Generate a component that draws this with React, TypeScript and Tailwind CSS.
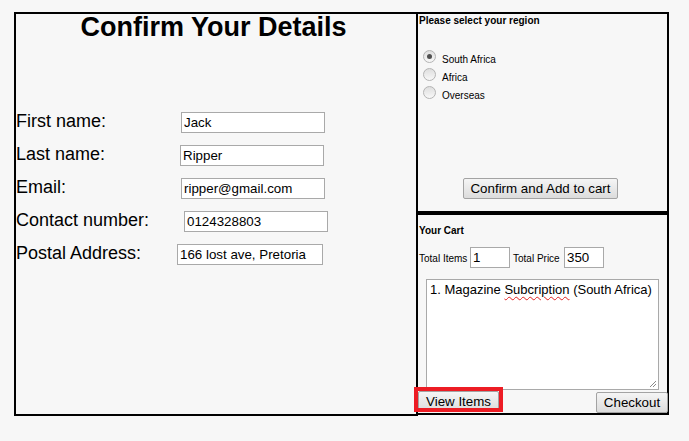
const font = { fontFamily: '"Liberation Sans", Arial, sans-serif' };

const fields = [
  { label: 'First name:', value: 'Jack', cls: 'ml-0 w-[144px]' },
  { label: 'Last name:', value: 'Ripper', cls: 'ml-[-1px] w-[144px]' },
  { label: 'Email:', value: 'ripper@gmail.com', cls: 'ml-0 w-[144px]' },
  { label: 'Contact number:', value: '0124328803', cls: 'ml-[3px] w-[144px]' },
  { label: 'Postal Address:', value: '166 lost ave, Pretoria', cls: 'ml-[-4px] w-[146px]' },
];

const regions = ['South Africa', 'Africa', 'Overseas'];

const btn =
  'h-[21px] border border-[#a3a3a3] rounded-[2px] bg-gradient-to-b from-[#f5f5f5] to-[#dcdcdc] text-[13.33px] text-black leading-none flex items-center justify-center';

function Radio({ checked }: { checked: boolean }) {
  return (
    <div className="w-[13px] h-[13px] rounded-full border border-[#b4b4b4] bg-gradient-to-b from-[#dedede] to-[#f8f8f8] flex items-center justify-center">
      {checked && <div className="w-[5px] h-[5px] rounded-full bg-[#505050]" />}
    </div>
  );
}

export default function App() {
  return (
    <div className="min-h-[441px] bg-[#f7f7f7] pl-[14px] pt-[12px] text-black" style={font}>
      <div className="flex">
        {/* Details form */}
        <div className="w-[404px] h-[404px] border-2 border-black">
          <h1 className="pr-[5px] text-center text-[27px] font-bold leading-[27px]">Confirm Your Details</h1>
          <div className="mt-[71px] flex flex-col">
            {fields.map((f) => (
              <div key={f.label} className="h-[33px] flex items-baseline">
                <span className="w-[165px] text-[18px] leading-[19px]">{f.label}</span>
                <input
                  readOnly
                  value={f.value}
                  className={`${f.cls} h-[21px] px-[2px] bg-white border border-[#a9a9a9] text-[13.33px] text-black outline-none`}
                />
              </div>
            ))}
          </div>
        </div>

        <div className="w-[253px] ml-[-2px] flex flex-col">
          {/* Region */}
          <div className="h-[201px] border-2 border-black flex flex-col">
            <div className="pl-[1px] text-[10px] font-bold leading-[13px]">Please select your region</div>
            <div className="mt-[23px] flex flex-col">
              {regions.map((r, i) => (
                <div key={r} className="h-[18px] flex items-start pl-[5px]">
                  <Radio checked={i === 0} />
                  <span className="ml-[6px] mt-[3px] text-[10px] leading-[13px]">{r}</span>
                </div>
              ))}
            </div>
            <button className={`${btn} mt-auto mb-[12px] ml-[45px] w-[155px]`}>Confirm and Add to cart</button>
          </div>

          {/* Cart */}
          <div className="h-[202px] border-2 border-black flex flex-col">
            <div className="pt-[9px] pl-[1px] text-[10px] font-bold leading-[13px]">Your Cart</div>
            <div className="mt-[10px] pl-[1px] flex items-baseline text-[10px]">
              <span className="w-[51px]">Total Items</span>
              <input
                readOnly
                value="1"
                className="w-[40px] h-[21px] px-[2px] bg-white border border-[#a9a9a9] text-[13.33px] outline-none"
              />
              <span className="ml-[3px] w-[51px]">Total Price</span>
              <input
                readOnly
                value="350"
                className="w-[40px] h-[21px] px-[2px] bg-white border border-[#a9a9a9] text-[13.33px] outline-none"
              />
            </div>
            <div className="relative mt-[11px] mx-[8px] h-[111px] bg-white border border-[#a9a9a9] px-[3px] pt-[2px] text-[13px] leading-[15px] whitespace-nowrap">
              1. Magazine{' '}
              <span className="underline decoration-wavy decoration-[#e02020] decoration-1 underline-offset-2">Subcription</span>{' '}
              (South Africa)
              <svg className="absolute right-[1px] bottom-[1px]" width="9" height="9" viewBox="0 0 9 9">
                <path d="M8 2 L2 8 M8 5 L5 8" stroke="#8a8a8a" strokeWidth="1" />
              </svg>
            </div>
            <div className="mt-[1px] flex justify-between items-start">
              <div className="relative">
                <button className={`${btn} w-[81px]`}>View Items</button>
                <div className="absolute left-[-4px] top-[-4px] w-[89px] h-[25px] border-4 border-[#ed1c24] pointer-events-none" />
              </div>
              <button className={`${btn} w-[72px] mt-[1px] mr-[-1px]`}>Checkout</button>
            </div>
          </div>
        </div>
      </div>
    </div>
  );
}
